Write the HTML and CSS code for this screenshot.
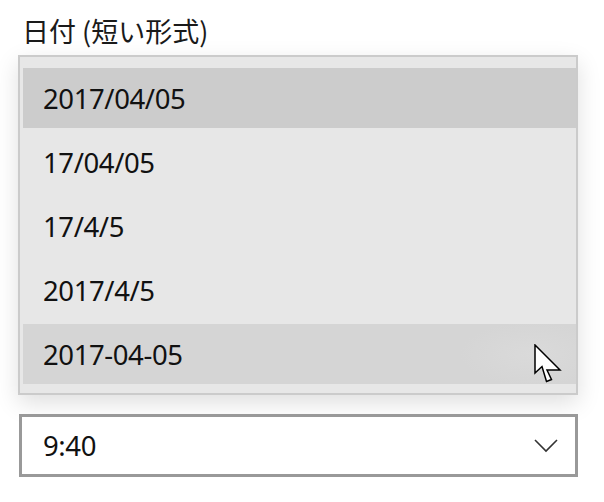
FILE: index.html
```html
<!DOCTYPE html>
<html lang="ja">
<head>
    <meta charset="UTF-8">
    <meta name="viewport" content="width=device-width, initial-scale=1.0">
    <title>日付 (短い形式)</title>
    <link rel="stylesheet" href="styles.css">
</head>
<body>
    <div class="field">
        <div class="field-label">日付 (短い形式)</div>

        <ul class="menu">
            <li class="option selected">2017/04/05</li>
            <li class="option">17/04/05</li>
            <li class="option">17/4/5</li>
            <li class="option">2017/4/5</li>
            <li class="option hover">2017-04-05</li>
        </ul>

        <div class="combo">
            <span class="combo-value">9:40</span>
            <svg class="chevron" width="24" height="14" viewBox="0 0 24 14">
                <polyline points="1,1 12,12 23,1" fill="none" stroke="#333" stroke-width="1.6"/>
            </svg>
        </div>
    </div>

    <!-- mouse pointer over the last option -->
    <svg class="pointer" width="30" height="42" viewBox="0 0 30 42">
        <path d="M1,1 L1,29 L8,22.5 L12.5,37.5 L17.5,35.5 L13,26 L26,26 Z" fill="#fff" stroke="#000" stroke-width="1.5" stroke-linejoin="miter"/>
    </svg>
</body>
</html>
```

FILE: styles.css
```css
body {
    margin: 0;
    padding: 0;
    background-color: #fff;
    font-family: "Noto Sans", "Noto Sans CJK JP", sans-serif;
    color: #111;
}

.field {
    display: flex;
    flex-direction: column;
    padding-left: 18px;
}

.field-label {
    font-family: "Noto Sans CJK JP", sans-serif;
    font-size: 27px;
    line-height: 34px;
    padding: 14px 0 7px 4px;
    color: #1a1a1a;
}

.menu {
    list-style: none;
    margin: 0;
    width: 560px;
    box-sizing: border-box;
    padding: 11px 0 9px 3px;
    background-color: #e7e7e7;
    border: 2px solid #cbcbcb;
    box-shadow: 0 8px 22px rgba(0, 0, 0, 0.13);
    display: flex;
    flex-direction: column;
    gap: 4px;
}

.option {
    height: 60px;
    display: flex;
    align-items: center;
    padding-left: 20px;
    font-size: 27.5px;
    letter-spacing: -0.4px;
}

.option.selected {
    background-color: #cccccc;
}

.option.hover {
    background: radial-gradient(ellipse 90px 40px at 92% 50%, #dadada, #d5d5d5 80%);
}

.combo {
    margin: 19px 0 0 1px;
    width: 559px;
    height: 63px;
    box-sizing: border-box;
    border: 3px solid #999;
    background-color: #fff;
    display: flex;
    align-items: center;
    justify-content: space-between;
    padding: 0 17px 0 21px;
    font-size: 27.5px;
    letter-spacing: -0.4px;
}

.chevron {
    display: block;
}

.pointer {
    position: absolute;
    left: 534px;
    top: 344px;
}
```
